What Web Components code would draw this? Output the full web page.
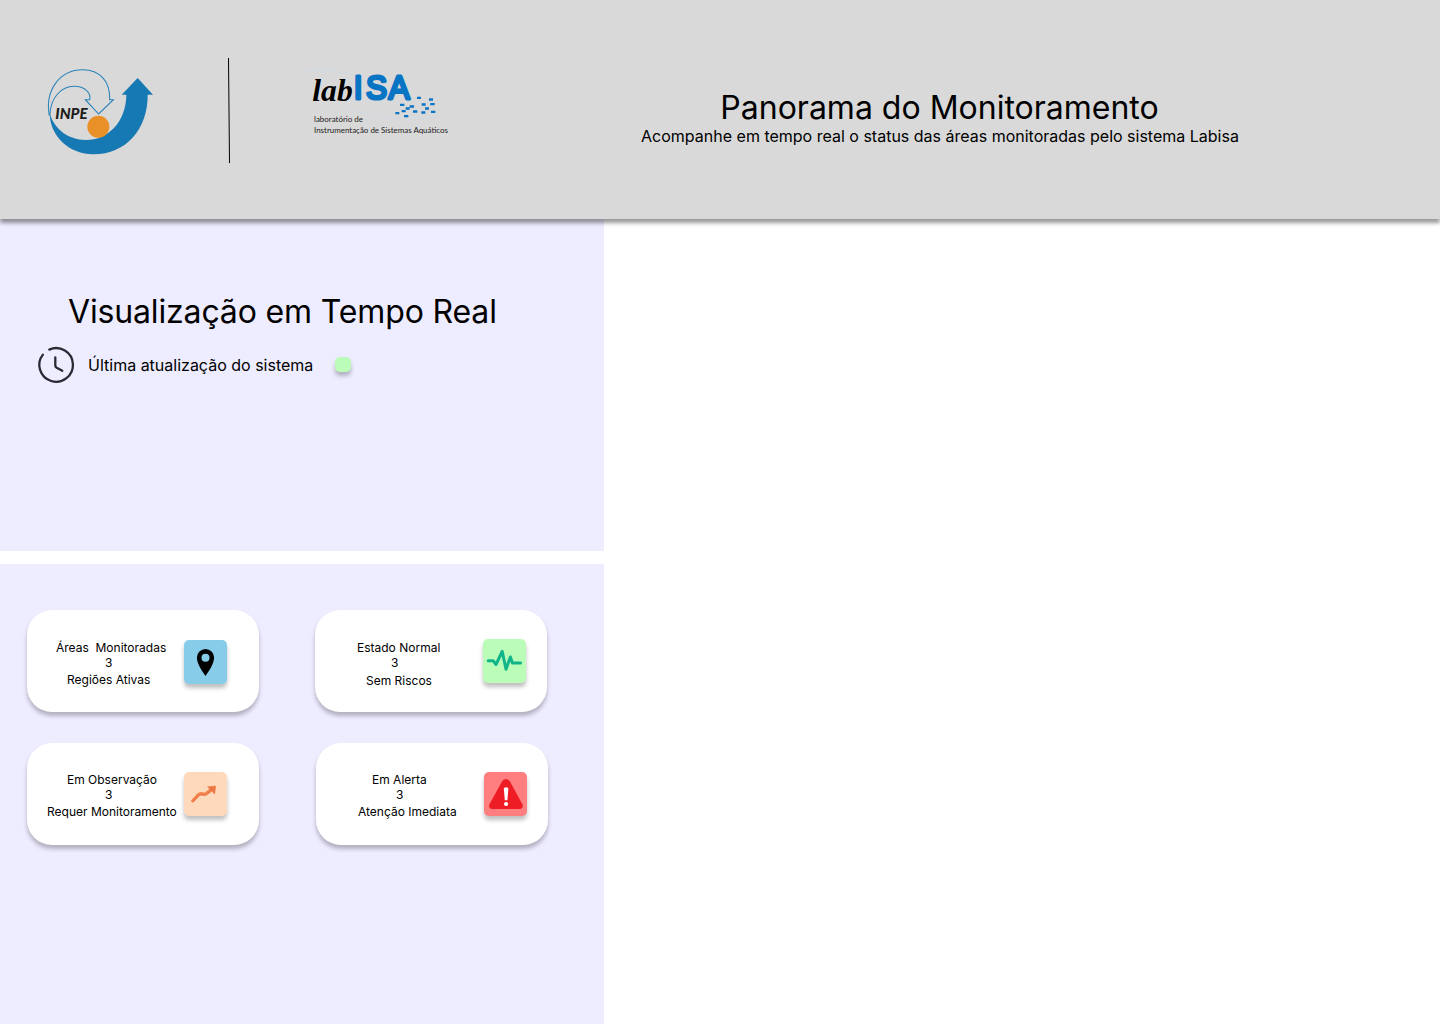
<!DOCTYPE html>
<html lang="pt-BR">
<head>
<meta charset="utf-8">
<title>Panorama do Monitoramento</title>
<style>
html,body{margin:0;background:#fff}
body{font-family:Inter,"Liberation Sans",sans-serif;color:#000;width:1440px;height:1024px;overflow:hidden}
</style>
</head>
<body>
<monitor-app></monitor-app>
<script>
const define = (name, html) => customElements.define(name, class extends HTMLElement {
  constructor() {
    super();
    const t = document.createElement('template');
    t.innerHTML = html;
    this.attachShadow({ mode: 'open' }).append(t.content.cloneNode(true));
  }
});

define('inpe-logo', `
<style>:host{display:block;width:120px;height:100px}svg{display:block}</style>
<svg width="120" height="100" viewBox="0 0 360 300" aria-label="INPE">
  <path d="M29 160 C42 205 82 240 138 240 C205 240 258 185 259 104 H245 L293 54 L339 104 H323 C324 205 260 283 160 283 C88 283 30 230 29 160Z" fill="#1779b3"/>
  <path d="M28 168 C14 92 58 29 128 29 C180 29 211 65 209 119 H220 L176 162 L136 119 H149 C154 98 133 79 103 79 C63 79 31 114 30 164" fill="none" stroke="#2a82b8" stroke-width="3.2"/>
  <circle cx="175" cy="200" r="33" fill="#ea9029"/>
  <text x="46" y="176" font-family="Lato,'Liberation Sans',sans-serif" font-weight="900" font-style="italic" font-size="47" textLength="97" lengthAdjust="spacingAndGlyphs" fill="#1d1d1b">INPE</text>
</svg>`);

define('labisa-logo', `
<style>:host{display:block;width:160px;height:80px}svg{display:block}</style>
<svg width="160" height="80" viewBox="0 0 480 240" aria-label="labISA">
  <path d="M0 43 C40 22 120 30 190 54" fill="none" stroke="#cfdae5" stroke-width="3"/>
  <path d="M115 130 C180 168 290 184 385 176 Q415 172 411 157" fill="none" stroke="#d1dae3" stroke-width="2.5"/>
  <text x="37" y="122" font-family="'Liberation Serif',serif" font-style="italic" font-weight="700" font-size="95" textLength="121" lengthAdjust="spacingAndGlyphs">lab</text>
  <text transform="scale(.93 1)" x="173.6 212.9 285.5" y="118" font-family="'Liberation Sans',sans-serif" font-size="102" fill="#0874c4" stroke="#0874c4" stroke-width="9.5" stroke-linejoin="round">ISA</text>
  <g fill="#0874c4">
    <path d="M351 110h12v7h-12zM387 115h12v7h-12zM300 131h13v7h-13zM329 136h13v7h-13zM365 130h12v7h-12zM391 129h13v7h-13zM317 142h12v7h-12zM375 142h12v7h-12zM305 150h12v7h-12zM339 151h13v7h-13zM364 154h12v7h-12zM393 152h13v7h-13zM286 156h12v7h-12zM312 165h13v7h-13z"/>
  </g>
  <g font-family="Lato,'Liberation Sans',sans-serif" font-size="23" fill="#222">
    <text x="42" y="186" textLength="147" lengthAdjust="spacingAndGlyphs">laboratório de</text>
    <text x="42" y="218" textLength="402" lengthAdjust="spacingAndGlyphs">Instrumentação de Sistemas Aquáticos</text>
  </g>
</svg>`);

define('page-header', `
<style>
:host{display:flex;box-sizing:border-box;height:219px;padding-left:40px;background:#d9d9d9;box-shadow:0 4px 4px rgba(0,0,0,.4);z-index:1}
inpe-logo{margin-top:60px}
.rule{display:block;margin:58px 0 0 67px}
labisa-logo{margin:60px 0 0 69px}
.titles{margin:88px 0 0 181px;width:598px;text-align:center}
h1{margin:0 1px 0 0;font-weight:400;font-size:32px;line-height:39px;white-space:nowrap}
p{margin:0;font-size:16px;line-height:19px;white-space:nowrap}
</style>
<inpe-logo></inpe-logo>
<svg class="rule" width="4" height="105" viewBox="0 0 4 105"><path d="M1.5 0L2.5 105" stroke="#000"/></svg>
<labisa-logo></labisa-logo>
<div class="titles"><h1><slot name="title"></slot></h1><p><slot name="subtitle"></slot></p></div>`);

define('live-panel', `
<style>
:host{display:block;box-sizing:border-box;height:332px;padding:73px 0 0 38px;background:#eeecff}
h2{margin:0 0 0 30px;font-weight:400;font-size:32px;letter-spacing:-.15px;line-height:39px;white-space:nowrap}
.row{display:flex;align-items:center;height:36px;margin-top:16px}
.row svg{overflow:visible}
.label{width:247px;margin-left:14px;font-size:16px;line-height:19px;white-space:nowrap}
.dot{width:16px;height:15px;margin-bottom:1px;border-radius:5px;background:#bbfcb9;box-shadow:0 4px 4px rgba(0,0,0,.25)}
</style>
<h2><slot name="title"></slot></h2>
<div class="row">
  <svg width="36" height="36" viewBox="0 0 36 36" fill="none" stroke="#2b2a34" stroke-width="2.3" stroke-linecap="round" stroke-linejoin="round"><path d="M11.3 2.6A16.8 16.8 0 1 1 4.9 7.6M17.3 10.5V18.5Q17.3 20 18.7 20.8L24.3 23.8"/></svg>
  <span class="label"><slot></slot></span><span class="dot"></span>
</div>`);

define('stat-card', `
<style>
:host{display:flex;box-sizing:border-box;width:232px;height:102px;border-radius:25px;background:#fff;box-shadow:0 4px 4px rgba(0,0,0,.25)}
.text{width:var(--tile-x,157px);flex:none;padding-top:var(--top,30px);box-sizing:border-box;font-size:12px;line-height:15px;white-space:pre}
.a,.b,.c{display:block}
.a{margin-left:var(--a)}.b{margin-left:var(--b)}.c{margin-left:var(--c);margin-top:var(--gap,2px)}
.tile{flex:none;width:43px;height:44px;margin-top:var(--tile-y,29px);border-radius:5px;background:var(--tile);box-shadow:0 4px 4px rgba(0,0,0,.25)}
::slotted(svg){display:block}
</style>
<div class="text"><span class="a"><slot name="label"></slot></span><span class="b"><slot name="value"></slot></span><span class="c"><slot name="note"></slot></span></div>
<div class="tile"><slot name="icon"></slot></div>`);

define('stats-panel', `
<style>
:host{display:block;box-sizing:border-box;height:460px;padding:46px 0 0 27px;background:#eeecff}
.row{display:flex;gap:56px}
.row+.row{margin-top:31px;gap:57px}
</style>
<div class="row">
<stat-card style="--a:29px;--b:78px;--c:40px;--tile-y:30px;--tile:#87cdea">
  <span slot="label">Áreas  Monitoradas</span><span slot="value">3</span><span slot="note">Regiões Ativas</span>
  <svg slot="icon" width="43" height="44" viewBox="0 0 43 44"><path fill-rule="evenodd" d="M21.5 9A8.6 8.6 0 0 0 12.9 17.6C12.9 23 17 30 21.5 36C26 30 30.1 23 30.1 17.6A8.6 8.6 0 0 0 21.5 9ZM21.5 13.7A4 4 0 1 1 21.5 21.7A4 4 0 1 1 21.5 13.7Z"/></svg>
</stat-card>
<stat-card style="--a:42px;--b:76px;--c:51px;--gap:3px;--tile-x:168px;--tile:#bbfcb9">
  <span slot="label">Estado Normal</span><span slot="value">3</span><span slot="note">Sem Riscos</span>
  <svg slot="icon" width="43" height="44" viewBox="0 0 43 44"><path d="M5.2 21.8H10.3L13 25.5L19.2 12.4L23 30.2L27.4 18L29.4 24H37.6" fill="none" stroke="#12b58a" stroke-width="3" stroke-linecap="round" stroke-linejoin="round"/></svg>
</stat-card>
</div>
<div class="row">
<stat-card style="--top:29px;--a:40px;--b:78px;--c:20px;--tile:#ffd9bb">
  <span slot="label">Em Observação</span><span slot="value">3</span><span slot="note">Requer Monitoramento</span>
  <svg slot="icon" width="43" height="44" viewBox="0 0 43 44"><path d="M8.6 29L14.2 22.8Q16 21 18 21.6Q20.8 22.8 22.8 21L27.6 17.2" fill="none" stroke="#f4824b" stroke-width="3" stroke-linecap="round" stroke-linejoin="round"/><path d="M9 30.2L15.3 23.8Q16.8 22.6 18.2 23.1Q21 24.2 23.2 22.6L28.2 18.6" fill="none" stroke="#d9622f" stroke-width=".7"/><path d="M23.5 14.8L31.7 14L30.6 22.2L28.6 19.7L25.6 16.8Z" fill="#ec7541" stroke="#ee7945" stroke-width=".5" stroke-linejoin="round"/></svg>
</stat-card>
<stat-card style="--top:29px;--a:56px;--b:80px;--c:42px;--tile-x:168px;--tile:#ff7e80">
  <span slot="label">Em Alerta</span><span slot="value">3</span><span slot="note">Atenção Imediata</span>
  <svg slot="icon" width="43" height="44" viewBox="0 0 43 44"><path d="M18.3 9Q22 4.8 25.7 9L38.5 32.5Q39.5 37 35.5 37H8.5Q4.3 37 5.3 32.5Z" fill="#ee1c25"/><path d="M19.8 16.2Q22 14.3 24.4 16.2L23.4 28.3H20.8Z" fill="#fff"/><circle cx="22.1" cy="32" r="2.1" fill="#fff"/></svg>
</stat-card>
</div>`);

define('monitor-app', `
<style>
:host{display:flex;flex-direction:column;height:1024px}
main{width:604px;display:flex;flex-direction:column;gap:13px}
</style>
<page-header><span slot="title">Panorama do Monitoramento</span><span slot="subtitle">Acompanhe em tempo real o status das áreas monitoradas pelo sistema Labisa</span></page-header>
<main>
<live-panel><span slot="title">Visualização em Tempo Real</span>Última atualização do sistema</live-panel>
<stats-panel></stats-panel>
</main>`);
</script>
</body>
</html>
